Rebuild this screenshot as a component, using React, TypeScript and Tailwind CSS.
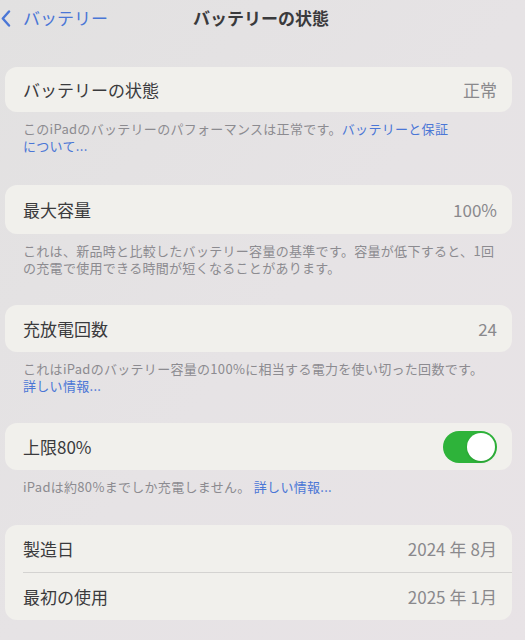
import { ReactNode } from "react";

const font = { fontFamily: '"Noto Sans CJK JP", "Noto Sans", sans-serif' };

const Card = ({ children }: { children: ReactNode }) => (
  <div className="ml-[5px] mr-[13px] rounded-[12px] bg-[#f1f0ec]">{children}</div>
);

const Row = ({ label, value, h }: { label: string; value?: ReactNode; h: string }) => (
  <div className={`flex items-center justify-between pl-[18px] pr-[15px] ${h}`}>
    <span className="text-[17px] text-[#3a3a3c]">{label}</span>
    {value}
  </div>
);

const Value = ({ children }: { children: ReactNode }) => (
  <span className="text-[17px] text-[#8a898c]">{children}</span>
);

const Gap = () => <span className="inline-block w-[4px]" />;

const Note = ({ children }: { children: ReactNode }) => (
  <p className="px-[23px] pt-[8px] text-[13px] leading-[17px] tracking-[0.3px] text-[#8c8b90]">{children}</p>
);

const Link = ({ children }: { children: ReactNode }) => (
  <span className="text-[#4a76d6]">{children}</span>
);

const Toggle = () => (
  <div className="flex h-[32px] w-[54px] items-center justify-end rounded-full bg-[#2eb33a] pr-[2px]">
    <div className="h-[28px] w-[28px] rounded-full bg-white shadow-sm" />
  </div>
);

export default function App() {
  return (
    <div className="h-[640px] w-[525px] overflow-hidden bg-gradient-to-br from-[#e2e1e1] via-[#e6e3e5] to-[#e8e3e6]" style={font}>
      <header className="relative flex h-[36px] items-center">
        <div className="flex items-center gap-[12px] pl-[1px] text-[#4a76d6]">
          <svg width="10" height="17" viewBox="0 0 10 17" fill="none">
            <path d="M8 1.5 L1.8 8.5 L8 15.5" stroke="#4a76d6" strokeWidth="2.4" strokeLinecap="round" strokeLinejoin="round" />
          </svg>
          <span className="text-[17px]">バッテリー</span>
        </div>
        <h1 className="absolute left-[193px] text-[17px] font-semibold text-[#3a3a3c]">バッテリーの状態</h1>
      </header>

      <div className="pt-[31px]">
        <Card>
          <Row label="バッテリーの状態" value={<Value>正常</Value>} h="h-[45px]" />
        </Card>
        <Note>
          このiPadのバッテリーのパフォーマンスは正常です。<Link>バッテリーと保証<br />について...</Link>
        </Note>
      </div>

      <div className="pt-[31px]">
        <Card>
          <Row label="最大容量" value={<Value>100%</Value>} h="h-[49px]" />
        </Card>
        <Note>
          これは、新品時と比較したバッテリー容量の基準です。容量が低下すると、1回
          <br />
          の充電で使用できる時間が短くなることがあります。
        </Note>
      </div>

      <div className="pt-[29px]">
        <Card>
          <Row label="充放電回数" value={<Value>24</Value>} h="h-[47px]" />
        </Card>
        <Note>
          これはiPadのバッテリー容量の100%に相当する電力を使い切った回数です。
          <br />
          <Link>詳しい情報...</Link>
        </Note>
      </div>

      <div className="pt-[29px]">
        <Card>
          <Row label="上限80%" value={<Toggle />} h="h-[47px]" />
        </Card>
        <Note>
          iPadは約80%までしか充電しません。 <Link>詳しい情報...</Link>
        </Note>
      </div>

      <div className="pt-[30px]">
        <Card>
          <Row
            label="製造日"
            value={
              <Value>
                2024<Gap />年<Gap />8月
              </Value>
            }
            h="h-[47px]"
          />
          <div className="ml-[18px] h-px bg-[#d4d3d1]" />
          <Row
            label="最初の使用"
            value={
              <Value>
                2025<Gap />年<Gap />1月
              </Value>
            }
            h="h-[47px]"
          />
        </Card>
      </div>
    </div>
  );
}
